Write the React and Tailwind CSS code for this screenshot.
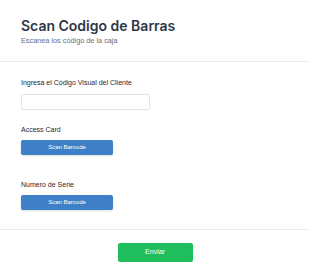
import React from "react";

const label = "text-[7px] leading-[10px] font-normal text-[#1f2633]";
const scanBtn =
  "w-[92px] h-[15px] rounded-[2px] bg-[#3d80c6] text-white text-[6px] flex items-center justify-center shadow-sm";

export default function App() {
  return (
    <div className="w-[310px] h-[279px] bg-white font-['Liberation_Sans',Arial,sans-serif]">
      {/* Header */}
      <div className="px-[21px] pt-[17px] h-[62px] border-b border-[#ececec]">
        <h1 className="font-['Inter',sans-serif] text-[14px] leading-[18px] font-semibold text-[#2d3748]">
          Scan Codigo de Barras
        </h1>
        <p className="mt-[1px] text-[7.3px] leading-[10px] text-[#646f85]">
          Escanea los código de la caja
        </p>
      </div>

      {/* Fields */}
      <div className="px-[21px] pt-[16px] h-[168px] border-b border-[#ececec]">
        <div className={label}>Ingresa el Código Visual del Cliente</div>
        <input
          type="text"
          className="mt-[6px] block w-[129px] h-[16px] rounded-[2px] border border-[#e2e4ea] bg-white"
        />

        <div className={`${label} mt-[15px]`}>Access Card</div>
        <div className={`${scanBtn} mt-[5px]`}>Scan Barcode</div>

        <div className={`${label} mt-[25px]`}>Numero de Serie</div>
        <div className={`${scanBtn} mt-[5px]`}>Scan Barcode</div>
      </div>

      {/* Footer */}
      <div className="flex justify-center pt-[13px]">
        <button className="w-[75px] h-[19px] rounded-[2px] bg-[#1fbe5c] text-white text-[7px]">
          Enviar
        </button>
      </div>
    </div>
  );
}
